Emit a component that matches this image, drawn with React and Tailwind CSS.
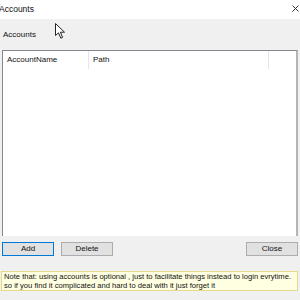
import React from 'react';

const Button = ({ label, focused, className = '' }) => (
  <button
    className={`h-[14px] w-[52px] bg-[#e1e1e1] border text-[8px] leading-none text-[#111] flex items-center justify-center ${
      focused ? 'border-[#0078d7]' : 'border-[#adadad]'
    } ${className}`}
  >
    {label}
  </button>
);

const Pointer = () => (
  <svg width="11" height="17" viewBox="0 0 11 17" className="absolute left-[55px] top-[23px]">
    <path d="M0.5 0.5 L0.5 12.5 L3.5 9.8 L5.8 15.2 L7.6 14.4 L5.4 9.2 L9.5 9.2 Z" fill="#fff" stroke="#222" strokeWidth="1" strokeLinejoin="round" />
  </svg>
);

const App = () => {
  return (
    <div className="w-[300px] h-[300px] bg-[#f0f0f0] flex flex-col relative overflow-hidden text-[#111] font-['Liberation_Sans',Arial,sans-serif]">
      {/* title bar */}
      <div className="h-[19px] bg-white flex items-center justify-between shrink-0">
        <span className="text-[8.5px] -ml-[1px]">Accounts</span>
        <svg width="7" height="7" viewBox="0 0 7 7" className="mr-[1px] -mt-[3px]">
          <path d="M0.5 0.5 L6.5 6.5 M6.5 0.5 L0.5 6.5" stroke="#333" strokeWidth="1" />
        </svg>
      </div>

      {/* label */}
      <div className="h-[31px] flex items-center pl-[3px] text-[8px]">Accounts</div>

      <Pointer />

      {/* list */}
      <div className="mx-[2px] h-[186px] bg-white border-t border-l border-[#828790] border-r-2 border-r-[#b5b5b8] flex flex-col">
        <div className="h-[18px] flex text-[8px]">
          <div className="w-[86px] pl-[4px] flex items-center border-r border-[#e5e5e5]">AccountName</div>
          <div className="w-[180px] pl-[4px] flex items-center border-r border-[#e5e5e5]">Path</div>
          <div className="flex-1" />
        </div>
      </div>

      {/* buttons */}
      <div className="flex mt-[6px] px-[2px]">
        <Button label="Add" focused className="w-[51px]" />
        <Button label="Delete" className="ml-[7px]" />
        <div className="flex-1" />
        <Button label="Close" />
      </div>

      {/* note */}
      <div className="mt-[15px] mx-[1px] mr-[2px] h-[20px] bg-[#ffffe1] border border-[#e6d98c] px-[2px] flex flex-col justify-center text-[7.6px] leading-[9px] text-[#111] whitespace-nowrap">
        <span>Note that: using accounts is optional , just to facilitate things instead to login evrytime.</span>
        <span>so if you find it complicated and hard to deal with it just forget it</span>
      </div>
    </div>
  );
};

export default App;
